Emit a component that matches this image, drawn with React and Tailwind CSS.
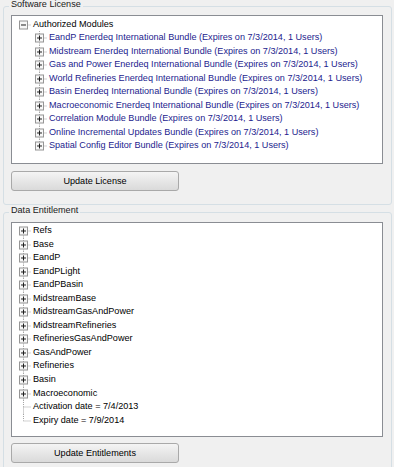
import React from "react";

const LINE = "#a3a3a3";

function Cell({ vTop, vBottom, hLine, box }) {
  const cy = 6.5;
  return (
    <svg width="16" height="13.55" viewBox="0 0 16 13.55" className="block shrink-0">
      {vTop && <line x1="8.5" y1="0" x2="8.5" y2={cy} stroke={LINE} strokeDasharray="1 1" />}
      {vBottom && <line x1="8.5" y1={cy} x2="8.5" y2="13.55" stroke={LINE} strokeDasharray="1 1" />}
      {hLine && <line x1="8.5" y1={cy + 0.5} x2="16" y2={cy + 0.5} stroke={LINE} strokeDasharray="1 1" />}
      {box && (
        <g>
          <rect x="4.5" y={cy - 3.5} width="8" height="8" fill="#f7f7f7" stroke="#959595" />
          <line x1="6" y1={cy + 0.5} x2="11" y2={cy + 0.5} stroke="#1e1e1e" />
          {box === "plus" && <line x1="8.5" y1={cy - 2} x2="8.5" y2={cy + 3} stroke="#1e1e1e" />}
        </g>
      )}
    </svg>
  );
}

function Row({ cells, text, color = "text-black" }) {
  return (
    <div className="flex h-[13.55px] items-center">
      {cells.map((c, i) => (
        <Cell key={i} {...c} />
      ))}
      <span className={`ml-[2px] whitespace-nowrap leading-[13.55px] ${color}`}>{text}</span>
    </div>
  );
}

const modules = [
  "EandP Enerdeq International Bundle (Expires on 7/3/2014, 1 Users)",
  "Midstream Enerdeq International Bundle (Expires on 7/3/2014, 1 Users)",
  "Gas and Power Enerdeq International Bundle (Expires on 7/3/2014, 1 Users)",
  "World Refineries Enerdeq International Bundle (Expires on 7/3/2014, 1 Users)",
  "Basin Enerdeq International Bundle (Expires on 7/3/2014, 1 Users)",
  "Macroeconomic Enerdeq International Bundle (Expires on 7/3/2014, 1 Users)",
  "Correlation Module Bundle (Expires on 7/3/2014, 1 Users)",
  "Online Incremental Updates Bundle (Expires on 7/3/2014, 1 Users)",
  "Spatial Config Editor Bundle (Expires on 7/3/2014, 1 Users)",
];

const entitlements = [
  "Refs",
  "Base",
  "EandP",
  "EandPLight",
  "EandPBasin",
  "MidstreamBase",
  "MidstreamGasAndPower",
  "MidstreamRefineries",
  "RefineriesGasAndPower",
  "GasAndPower",
  "Refineries",
  "Basin",
  "Macroeconomic",
];

function Button({ children }) {
  return (
    <button className="flex h-[20px] w-[168px] items-center justify-center rounded-[3px] border border-[#a9a9a9] bg-linear-to-b from-[#f4f4f4] to-[#dadada] text-[9.1px] leading-[11px] text-black">
      {children}
    </button>
  );
}

function Group({ title, className, children }) {
  return (
    <fieldset className={`ml-[3px] w-[389px] rounded-[3px] border border-[#d5dfe5] pl-[7px] ${className}`}>
      <legend className="ml-[-2px] px-[2px] pb-[3px] leading-[11px] text-[#1a1a1a]">{title}</legend>
      {children}
    </fieldset>
  );
}

export default function App() {
  const extras = ["Activation date = 7/4/2013", "Expiry date = 7/9/2014"];
  const total = entitlements.length + extras.length;
  return (
    <div className="h-[467px] w-[394px] overflow-hidden bg-[#f0f0f0] font-['Liberation_Sans',Arial,sans-serif] text-[9.1px]">
      <Group title="Software License" className="mt-[-1px] h-[206px] pt-[2px] pb-[13px]">
        <div className="h-[149px] w-[372px] border border-[#8a8d93] bg-white pt-[1.5px] pl-[3px]">
          <Row cells={[{ hLine: true, box: "minus" }]} text="Authorized Modules" />
          {modules.map((m, i) => (
            <Row
              key={m}
              cells={[{}, { vTop: true, vBottom: i < modules.length - 1, hLine: true, box: "plus" }]}
              text={m}
              color="text-[#1c1c8e]"
            />
          ))}
        </div>
        <div className="mt-[7px]">
          <Button>Update License</Button>
        </div>
      </Group>
      <Group title="Data Entitlement" className="h-[280px] pt-[3px]">
        <div className="h-[215px] w-[372px] border border-[#8a8d93] bg-white pt-[1px] pl-[3px]">
          {entitlements.map((e, i) => (
            <Row key={e} cells={[{ vTop: i > 0, vBottom: true, hLine: true, box: "plus" }]} text={e} />
          ))}
          {extras.map((e, j) => {
            const idx = entitlements.length + j;
            return <Row key={e} cells={[{ vTop: true, vBottom: idx < total - 1, hLine: true }]} text={e} />;
          })}
        </div>
        <div className="mt-[6px]">
          <Button>Update Entitlements</Button>
        </div>
      </Group>
    </div>
  );
}
